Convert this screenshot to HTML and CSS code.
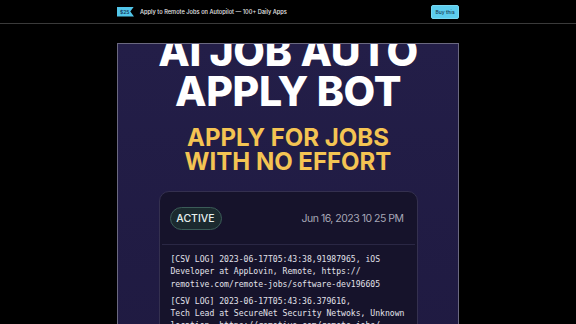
FILE: index.html
```html
<!DOCTYPE html>
<html>
<head>
<meta charset="utf-8">
<link rel="stylesheet" href="styles.css">
</head>
<body>
<header class="topbar">
  <div class="topbar-inner">
    <div class="brand">
      <span class="price">$25</span>
      <span class="tagline">Apply to Remote Jobs on Autopilot — 100+ Daily Apps</span>
    </div>
    <button class="buy">Buy this</button>
  </div>
</header>
<main class="stage">
  <div class="poster">
    <h1 class="title">AI JOB AUTO<br>APPLY BOT</h1>
    <h2 class="subtitle">APPLY FOR JOBS<br>WITH NO EFFORT</h2>
    <section class="card">
      <div class="card-head">
        <span class="status">ACTIVE</span>
        <span class="date">Jun 16, 2023 10 25 PM</span>
      </div>
      <div class="log">
        <p>[CSV LOG] 2023-06-17T05:43:38,91987965, iOS<br>Developer at AppLovin, Remote, https://<br>remotive.com/remote-jobs/software-dev196605</p>
        <p>[CSV LOG] 2023-06-17T05:43:36.379616,<br>Tech Lead at SecureNet Security Netwoks, Unknown<br>location, https://remotive.com/remote-jobs/<br>software-dev196603</p>
      </div>
    </section>
  </div>
</main>
</body>
</html>
```
FILE: styles.css
```css
* { box-sizing: border-box; }
html, body { margin: 0; padding: 0; }
body {
  background: #000;
  width: 576px;
  height: 324px;
  overflow: hidden;
  font-family: Inter, "Noto Sans", sans-serif;
}
.topbar {
  height: 24px;
  border-bottom: 1px solid #3a3a3a;
}
.topbar-inner {
  width: 342px;
  margin: 0 auto;
  height: 23px;
  display: flex;
  align-items: center;
  justify-content: space-between;
}
.brand { display: flex; align-items: center; gap: 6px; }
.price {
  background: #52c6ea;
  color: #16365a;
  font-size: 5px;
  font-weight: 600;
  height: 10px;
  width: 17px;
  padding-left: 3px;
  display: flex;
  align-items: center;
  clip-path: polygon(0 0, 100% 0, 78% 50%, 100% 100%, 0 100%);
}
.tagline {
  color: #e8e8ea;
  font-size: 5.7px;
  font-weight: 500;
}
.buy {
  background: #5ccdee;
  border: 1px solid #78d8f2;
  border-radius: 2px;
  color: #173a55;
  font-family: Inter, sans-serif;
  font-size: 5px;
  font-weight: 500;
  height: 14px;
  width: 28px;
  padding: 0;
}
.stage {
  display: flex;
  justify-content: center;
  padding-top: 19px;
}
.poster {
  width: 342px;
  height: 320px;
  border: 1px solid #6a6880;
  border-bottom: none;
  background: linear-gradient(#231e48, #1f1a41);
  overflow: hidden;
  display: flex;
  flex-direction: column;
  align-items: center;
}
.title {
  margin: -13px 0 0;
  color: #fff;
  font-size: 41px;
  font-weight: 800;
  line-height: 40px;
  text-align: center;
  letter-spacing: -0.3px;
}
.subtitle {
  margin: 15px 0 0;
  color: #f4c453;
  font-size: 24px;
  font-weight: 700;
  line-height: 24px;
  text-align: center;
}
.card {
  margin-top: 17px;
  width: 259px;
  flex-shrink: 0;
  background: #16132b;
  border: 1px solid #34304f;
  border-radius: 10px;
  padding: 0 2px;
}
.card-head {
  height: 53px;
  display: flex;
  align-items: center;
  justify-content: space-between;
  padding: 0 11px 0 8px;
  border-bottom: 1px solid #2a2744;
}
.status {
  width: 52px;
  height: 23px;
  border-radius: 12px;
  border: 1px solid #3b5c58;
  background: #1b2a2f;
  color: #e6f0ee;
  font-size: 10.5px;
  font-weight: 500;
  display: flex;
  align-items: center;
  justify-content: center;
}
.date {
  color: #a6a6b6;
  font-size: 10.5px;
  font-weight: 400;
  letter-spacing: -0.5px;
}
.log {
  padding: 8px 6px 0 9px;
}
.log p {
  margin: 0 0 5px;
  color: #e2e2ea;
  font-family: "DejaVu Sans Mono", "Liberation Mono", monospace;
  font-size: 8.1px;
  line-height: 12.3px;
  white-space: nowrap;
}
```
